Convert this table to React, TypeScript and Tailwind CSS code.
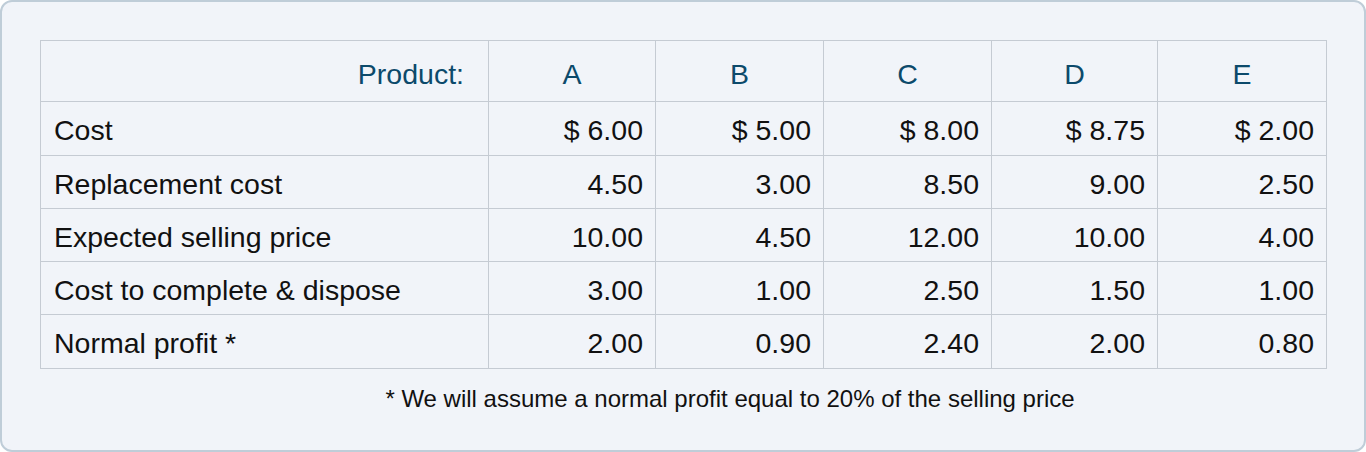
const products = ['A', 'B', 'C', 'D', 'E']

const rows: { label: string; values: string[] }[] = [
  { label: 'Cost', values: ['$ 6.00', '$ 5.00', '$ 8.00', '$ 8.75', '$ 2.00'] },
  { label: 'Replacement cost', values: ['4.50', '3.00', '8.50', '9.00', '2.50'] },
  { label: 'Expected selling price', values: ['10.00', '4.50', '12.00', '10.00', '4.00'] },
  { label: 'Cost to complete & dispose', values: ['3.00', '1.00', '2.50', '1.50', '1.00'] },
  { label: 'Normal profit *', values: ['2.00', '0.90', '2.40', '2.00', '0.80'] },
]

const rowHeights = ['h-[54px]', 'h-[53px]', 'h-[53px]', 'h-[53px]', 'h-[54px]']

export default function App() {
  return (
    <div className="w-[1366px] h-[452px] bg-[#f1f4f9] border-2 border-[#bfcdd8] rounded-[12px] pt-[38px] px-[38px] font-['Liberation_Sans',Arial,sans-serif]">
      <table className="w-[1286px] table-fixed border-collapse">
        <colgroup>
          <col className="w-[448px]" />
          <col className="w-[167px]" />
          <col className="w-[168px]" />
          <col className="w-[168px]" />
          <col className="w-[166px]" />
          <col className="w-[169px]" />
        </colgroup>
        <thead>
          <tr className="h-[61px] text-[#0c4a6b] text-[28.5px]">
            <th className="border border-[#c5cbd3] text-right font-normal pr-[24px] pt-[6px]">Product:</th>
            {products.map((p) => (
              <th key={p} className="border border-[#c5cbd3] text-center font-normal pt-[6px]">
                {p}
              </th>
            ))}
          </tr>
        </thead>
        <tbody>
          {rows.map((row, i) => (
            <tr key={row.label} className={`${rowHeights[i]} text-[28.5px] text-[#111]`}>
              <td className="border border-[#c5cbd3] pl-[13px] pt-[4px]">{row.label}</td>
              {row.values.map((v, j) => (
                <td key={j} className="border border-[#c5cbd3] text-right pr-[12px] pt-[4px]">
                  {v}
                </td>
              ))}
            </tr>
          ))}
        </tbody>
      </table>
      <p className="mt-[12px] pl-[94px] text-center text-[24px] text-[#111]">
        * We will assume a normal profit equal to 20% of the selling price
      </p>
    </div>
  )
}
